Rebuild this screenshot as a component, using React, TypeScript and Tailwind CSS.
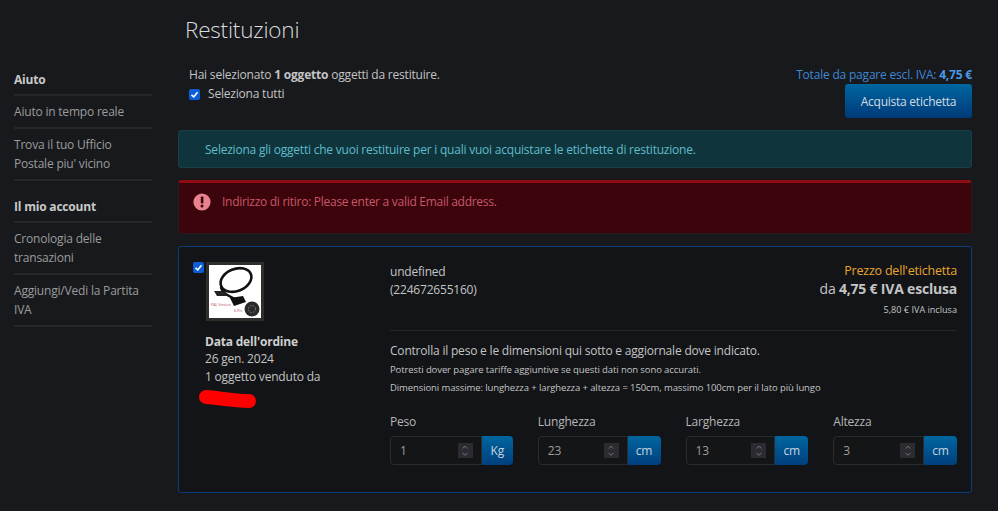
import { ChevronDown, ChevronUp } from "lucide-react";

const font = { fontFamily: '"Open Sans", "Noto Sans", sans-serif' };

const CheckBox = () => (
  <span className="flex h-[11px] w-[11px] shrink-0 items-center justify-center rounded-[2px] bg-[#0b5ed7]">
    <svg viewBox="0 0 12 12" className="h-[9px] w-[9px]" fill="none" stroke="#fff" strokeWidth="2.2">
      <path d="M2 6.5 5 9.2 10 3" />
    </svg>
  </span>
);

const Thumb = () => (
  <div className="h-[59px] w-[58px] shrink-0 border-[3px] border-[#2e2e2a] bg-white">
    <svg viewBox="0 0 52 53" className="h-full w-full">
      <ellipse cx="27" cy="15" rx="16" ry="11" transform="rotate(-22 27 15)" fill="none" stroke="#111" strokeWidth="2.6" />
      <path d="M12 22 C13 28 20 31 26 34" fill="none" stroke="#111" strokeWidth="2.6" />
      <path d="M5 26h8l5 2-1 3H8z" fill="#222" />
      <path d="M21 33l13-2 3 6-12 4z" fill="#111" />
      <circle cx="43" cy="44" r="7.5" fill="#2a2a2a" />
      <circle cx="43" cy="44" r="3.5" fill="none" stroke="#888" strokeWidth="1" strokeDasharray="1.4 1.4" />
      <text x="2" y="41" fontSize="3.6" letterSpacing="0" fill="#b8475c">PAL Version</text>
      <text x="25" y="47" fontSize="3.6" letterSpacing="0" fill="#b8475c">6-Pin</text>
    </svg>
  </div>
);

const Scribble = () => (
  <svg viewBox="0 0 57 18" className="-ml-[6px] mt-[4px] h-[18px] w-[57px]">
    <path d="M7 7 C20 8 35 11 50 11" fill="none" stroke="#ff0000" strokeWidth="14" strokeLinecap="round" />
  </svg>
);

const SideLink = ({ children, strong }: { children: React.ReactNode; strong?: boolean }) => (
  <div className={`border-b-2 border-[#25272a] ${strong ? "pb-[5px] font-bold text-[#c8c9c9]" : "py-[6px] text-[#9b9c9c]"}`}>
    {children}
  </div>
);

const Measure = ({ label, value, unit, w }: { label: string; value: string; unit: string; w: string }) => (
  <div className={`flex flex-col gap-[4px] ${w}`}>
    <label className="h-[20px] leading-[20px] text-[#b6b6b6]">{label}</label>
    <div className="flex h-[29px]">
      <div className="flex min-w-0 flex-1 items-center justify-between rounded-l-[4px] border border-[#2a2c2f] bg-[#131517] pl-[9px] pr-[8px] text-[#9d9d9d]">
        <span>{value}</span>
        <span className="flex h-[15px] w-[15px] flex-col items-center justify-center bg-[#2b2b31] text-[#a2a2a7]">
          <ChevronUp size={10} strokeWidth={1.75} className="-mb-[1px]" />
          <ChevronDown size={10} strokeWidth={1.75} className="-mt-[1px]" />
        </span>
      </div>
      <div className={`flex items-center justify-center rounded-r-[4px] bg-gradient-to-b from-[#00669f] to-[#003f7e] text-[#c9d3dd] ${unit === "Kg" ? "w-[31px]" : "w-[33px]"}`}>
        {unit}
      </div>
    </div>
  </div>
);

export default function App() {
  return (
    <div style={font} className="flex h-[511px] w-[998px] overflow-hidden bg-[#17191c] text-[12px] tracking-[-0.2px] text-[#c4c4c4]">
      <aside className="w-[178px] shrink-0 pl-[14px] pr-[26px] pt-[70px] leading-[19px]">
        <SideLink strong>Aiuto</SideLink>
        <SideLink>Aiuto in tempo reale</SideLink>
        <SideLink>Trova il tuo Ufficio Postale piu' vicino</SideLink>
        <div className="mt-[16px]">
          <SideLink strong>Il mio account</SideLink>
          <SideLink>Cronologia delle transazioni</SideLink>
          <SideLink>Aggiungi/Vedi la Partita IVA</SideLink>
        </div>
      </aside>

      <main className="w-[794px] shrink-0">
        <h1 className="ml-[7px] pt-[14px] text-[22.5px] font-light leading-[32px] text-[#dcdcdc]">Restituzioni</h1>

        <div className="mt-[20px] flex items-start justify-between pl-[11px]">
          <div>
            <p className="leading-[18px]">
              Hai selezionato <b>1 oggetto</b> oggetti da restituire.
            </p>
            <div className="mt-[1px] flex items-center gap-[8px] leading-[18px]">
              <CheckBox />
              <span>Seleziona tutti</span>
            </div>
          </div>
          <div className="flex flex-col items-end">
            <p className="leading-[18px] text-[#3f87d6]">
              Totale da pagare escl. IVA: <b className="text-[#4b97e6]">4,75 €</b>
            </p>
            <button className="h-[34px] w-[127px] rounded-[3px] bg-gradient-to-b from-[#00669f] to-[#003a7a] pt-[1px] tracking-[-0.25px] text-[#d4dbe2]">
              Acquista etichetta
            </button>
          </div>
        </div>

        <div className="mt-[12px] flex h-[38px] items-center rounded-[3px] border border-[#1a4046] bg-[#10343c] pl-[26px] pt-[1px] tracking-[-0.22px] text-[#5fbccb]">
          Seleziona gli oggetti che vuoi restituire per i quali vuoi acquistare le etichette di restituzione.
        </div>

        <div className="mt-[12px] flex h-[54px] items-start gap-[11px] rounded-[3px] border border-t-[3px] border-[#2a1a1d] border-t-[#8f0d12] bg-[#3c050b] pl-[14px] pt-[10px] text-[#c9566a]">
          <svg viewBox="0 0 18 18" className="h-[18px] w-[18px] shrink-0">
            <circle cx="9" cy="9" r="8.6" fill="#e8828f" />
            <rect x="7.8" y="3.5" width="2.6" height="7" rx="0.8" fill="#3c050b" />
            <circle cx="9" cy="13" r="1.5" fill="#3c050b" />
          </svg>
          <span className="leading-[18px] tracking-[-0.28px]">Indirizzo di ritiro: Please enter a valid Email address.</span>
        </div>

        <section className="mt-[12px] flex h-[247px] rounded-[3px] border border-[#0b3d7a] bg-[#121417] pl-[14px] pr-[14px] pt-[15px]">
          <div className="w-[197px] shrink-0">
            <div className="flex items-start gap-[2px]">
              <CheckBox />
              <Thumb />
            </div>
            <div className="ml-[12px] mt-[12px] leading-[18px]">
              <p className="font-bold leading-[17px] text-[#cfcfcf]">Data dell'ordine</p>
              <p>26 gen. 2024</p>
              <p>1 oggetto venduto da</p>
              <Scribble />
            </div>
          </div>

          <div className="min-w-0 flex-1">
            <div className="flex h-[69px] justify-between border-b border-[#24262a] leading-[18px]">
              <div className="pt-[1px]">
                <p>undefined</p>
                <p>(224672655160)</p>
              </div>
              <div className="text-right">
                <p className="text-[12.5px] text-[#e9a52f]">Prezzo dell'etichetta</p>
                <p className="text-[14px]">
                  da <b>4,75 € IVA esclusa</b>
                </p>
                <p className="mt-[3px] text-[9.1px] tracking-normal">5,80 € IVA inclusa</p>
              </div>
            </div>
            <p className="mt-[10px] leading-[20px]">Controlla il peso e le dimensioni qui sotto e aggiornale dove indicato.</p>
            <p className="text-[9.5px] leading-[18px] tracking-[-0.1px]">Potresti dover pagare tariffe aggiuntive se questi dati non sono accurati.</p>
            <p className="text-[9.5px] leading-[18px] tracking-[-0.1px]">
              Dimensioni massime: lunghezza + larghezza + altezza = 150cm, massimo 100cm per il lato più lungo
            </p>
            <div className="mt-[15px] flex gap-[25px]">
              <Measure label="Peso" value="1" unit="Kg" w="w-[123px]" />
              <Measure label="Lunghezza" value="23" unit="cm" w="w-[123px]" />
              <Measure label="Larghezza" value="13" unit="cm" w="w-[123px]" />
              <Measure label="Altezza" value="3" unit="cm" w="w-[124px]" />
            </div>
          </div>
        </section>
      </main>
    </div>
  );
}
